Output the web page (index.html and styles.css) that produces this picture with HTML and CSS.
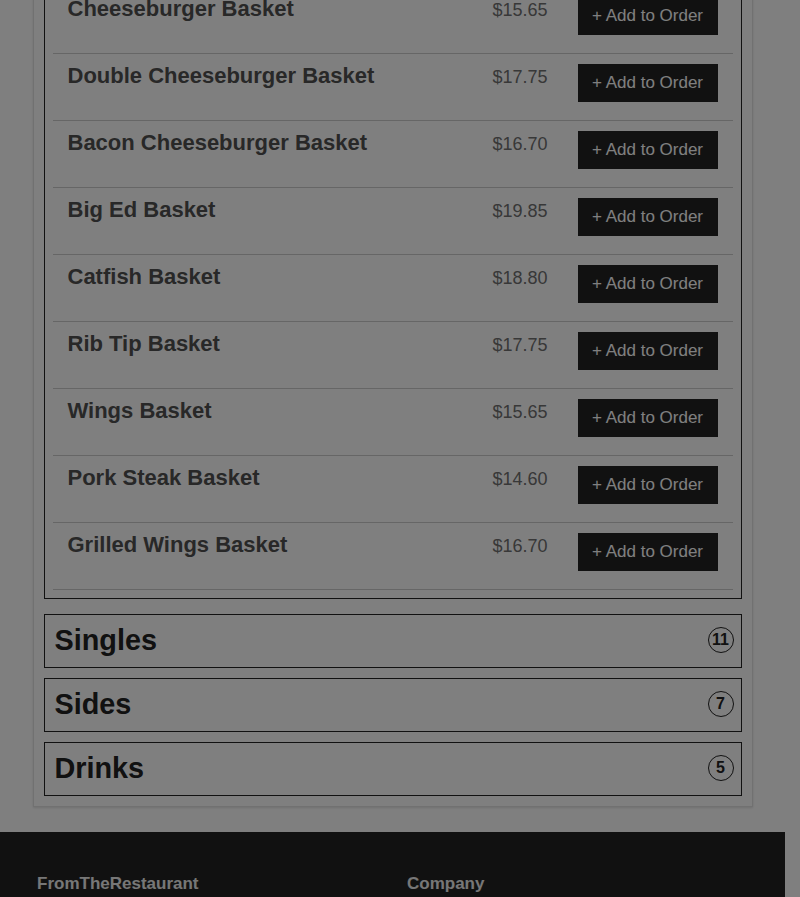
FILE: index.html
```html
<!DOCTYPE html>
<html lang="en">
<head>
  <meta charset="UTF-8" />
  <meta name="viewport" content="width=device-width, initial-scale=1.0"/>
  <title>FromTheRestaurant - Menu</title>
  <link rel="stylesheet" href="styles.css">
</head>
<body>

<div class="page">
  <div class="menu-card">

    <div class="category open">
      <div class="item">
        <h3 class="item-name">Cheeseburger Basket</h3>
        <span class="item-price">$15.65</span>
        <button class="add-btn">+ Add to Order</button>
      </div>
      <div class="item">
        <h3 class="item-name">Double Cheeseburger Basket</h3>
        <span class="item-price">$17.75</span>
        <button class="add-btn">+ Add to Order</button>
      </div>
      <div class="item">
        <h3 class="item-name">Bacon Cheeseburger Basket</h3>
        <span class="item-price">$16.70</span>
        <button class="add-btn">+ Add to Order</button>
      </div>
      <div class="item">
        <h3 class="item-name">Big Ed Basket</h3>
        <span class="item-price">$19.85</span>
        <button class="add-btn">+ Add to Order</button>
      </div>
      <div class="item">
        <h3 class="item-name">Catfish Basket</h3>
        <span class="item-price">$18.80</span>
        <button class="add-btn">+ Add to Order</button>
      </div>
      <div class="item">
        <h3 class="item-name">Rib Tip Basket</h3>
        <span class="item-price">$17.75</span>
        <button class="add-btn">+ Add to Order</button>
      </div>
      <div class="item">
        <h3 class="item-name">Wings Basket</h3>
        <span class="item-price">$15.65</span>
        <button class="add-btn">+ Add to Order</button>
      </div>
      <div class="item">
        <h3 class="item-name">Pork Steak Basket</h3>
        <span class="item-price">$14.60</span>
        <button class="add-btn">+ Add to Order</button>
      </div>
      <div class="item">
        <h3 class="item-name">Grilled Wings Basket</h3>
        <span class="item-price">$16.70</span>
        <button class="add-btn">+ Add to Order</button>
      </div>
    </div>

    <div class="category">
      <div class="category-head">
        <h2>Singles</h2>
        <span class="count">11</span>
      </div>
    </div>

    <div class="category">
      <div class="category-head">
        <h2>Sides</h2>
        <span class="count">7</span>
      </div>
    </div>

    <div class="category">
      <div class="category-head">
        <h2>Drinks</h2>
        <span class="count">5</span>
      </div>
    </div>

  </div>

  <footer class="site-footer">
    <div class="footer-col">
      <h4>FromTheRestaurant</h4>
      <p>Order online for pickup</p>
    </div>
    <div class="footer-col">
      <h4>Company</h4>
      <p>About us</p>
    </div>
  </footer>
</div>

<div class="backdrop"></div>

</body>
</html>
```

FILE: styles.css
```css
* {
  box-sizing: border-box;
}

body {
  margin: 0;
  font-family: 'Liberation Sans', Arial, sans-serif;
  background: #fff;
  color: #222;
}

/* page is scrolled down into the Baskets list */
.page {
  width: 785px;
  margin-top: -25px;
}

.menu-card {
  max-width: 720px;
  margin: 0 auto;
  padding: 10px;
  border: 1px solid #e2e2e2;
  box-shadow: 0 1px 2px rgba(0, 0, 0, 0.12);
}

.category {
  border: 1px solid #222;
  margin-bottom: 10px;
}

.category:last-child {
  margin-bottom: 0;
}

.category.open {
  padding: 0 8px 8px;
  margin-bottom: 15px;
}

.item {
  display: flex;
  align-items: flex-start;
  padding: 10px 15px 18px;
  border-bottom: 1px solid #ccc;
}

.item-name {
  flex: 1;
  margin: 0;
  font-size: 22px;
  line-height: 23px;
  color: #505050;
}

.item-price {
  margin-right: 30px;
  padding-top: 3px;
  font-size: 18px;
  line-height: 1.2;
  color: #707070;
}

.add-btn {
  width: 140px;
  height: 38px;
  padding: 0 14px;
  background: #222;
  border: none;
  color: #fff;
  font-family: inherit;
  font-size: 17px;
  cursor: pointer;
}

.category-head {
  display: flex;
  align-items: center;
  justify-content: space-between;
  height: 52px;
  padding: 0 7px 2px 10px;
}

.category-head h2 {
  margin: 0;
  font-size: 28.8px;
  line-height: 1.2;
  color: #222;
}

.count {
  display: flex;
  align-items: center;
  justify-content: center;
  width: 26px;
  height: 26px;
  border: 1px solid #222;
  border-radius: 50%;
  font-size: 16px;
  font-weight: bold;
  color: #222;
}

.site-footer {
  display: grid;
  grid-template-columns: 370px 370px;
  margin-top: 25px;
  padding: 42px 37px 40px;
  background: #222;
  color: #eee;
}

.site-footer h4 {
  margin: 0 0 12px;
  font-size: 17px;
  line-height: 1.2;
}

.site-footer p {
  margin: 0;
  font-size: 15px;
}

.backdrop {
  position: fixed;
  top: 0;
  left: 0;
  right: 0;
  bottom: 0;
  background: rgba(0, 0, 0, 0.5);
}
```
